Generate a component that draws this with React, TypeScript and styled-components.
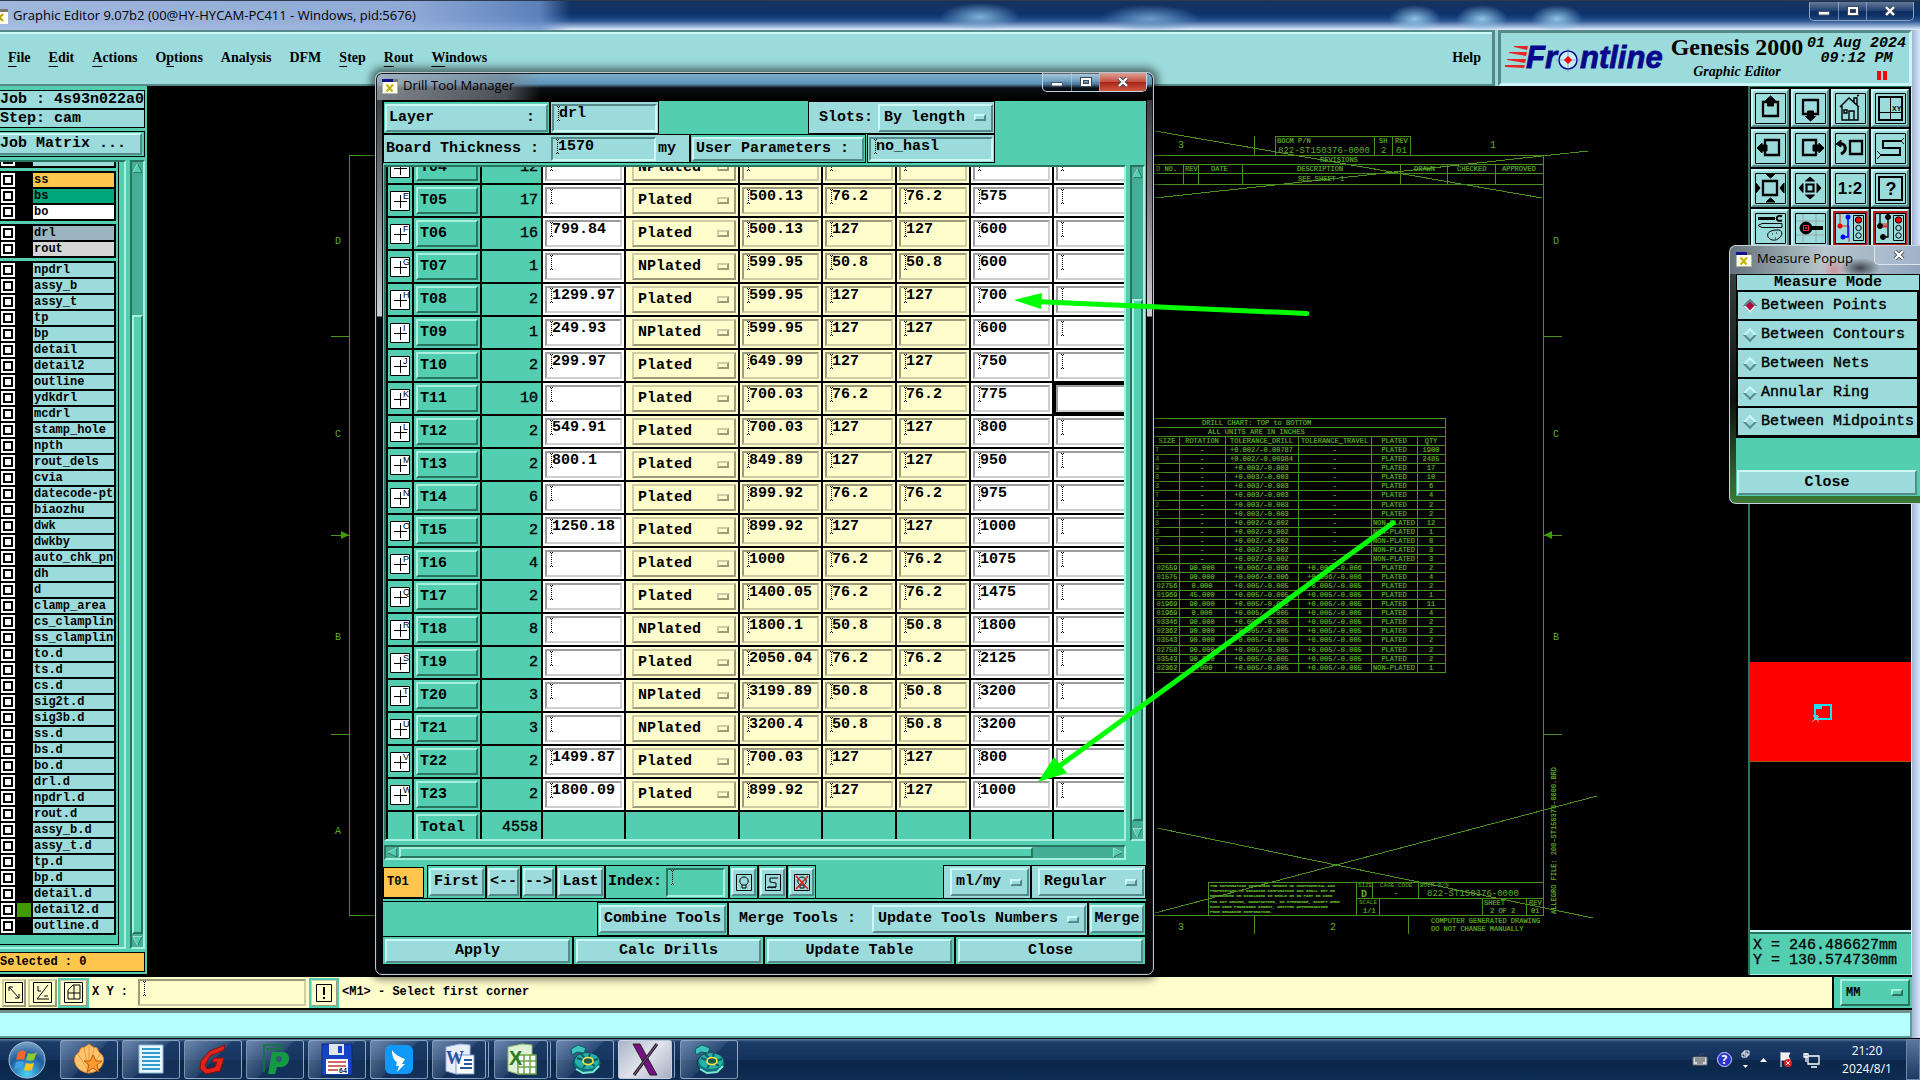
import React from 'react';
import styled, { createGlobalStyle, css } from 'styled-components';

const AQUA = '#9cdbdb';
const AQUA_HI = '#ccf7f7';
const AQUA_LO = '#568a8a';
const GREEN = '#53ceb0';
const GREEN_HI = '#a8f0de';
const GREEN_LO = '#28745f';
const TROUGH = '#44ae96';
const CREAM = '#fffdcc';
const ORANGE = '#ffc64d';
const CAD = '#4c9020';
const CAD_TEXT = '#5fae28';
const MONO = '"Liberation Mono", "Courier New", monospace';
const SERIF = '"Liberation Serif", "Times New Roman", serif';
const SANS = '"Open Sans", "Noto Sans", sans-serif';

type Tone = 'aqua' | 'green' | 'cream' | 'white';
const tones: Record<Tone, { bg: string; hi: string; lo: string }> = {
  aqua: { bg: AQUA, hi: AQUA_HI, lo: AQUA_LO },
  green: { bg: GREEN, hi: GREEN_HI, lo: GREEN_LO },
  cream: { bg: CREAM, hi: '#cfcda5', lo: '#9c9a78' },
  white: { bg: '#ffffff', hi: '#cfcfcf', lo: '#9c9c9c' },
};

const raised = (t: Tone) => css`
  background: ${tones[t].bg};
  border: 2px solid;
  border-color: ${tones[t].hi} ${tones[t].lo} ${tones[t].lo} ${tones[t].hi};
`;
const sunken = (t: Tone) => css`
  background: ${tones[t].bg};
  border: 2px solid;
  border-color: ${tones[t].lo} ${tones[t].hi} ${tones[t].hi} ${tones[t].lo};
`;

const GlobalStyle = createGlobalStyle`
  *, *::before, *::after { box-sizing: border-box; }
  body { margin: 0; background: #000; overflow: hidden; }
  button, input, select { margin: 0; border-radius: 0; color: #000; font: inherit; }
  svg { display: block; flex: none; }
`;

const Desktop = styled.div`
  position: relative;
  display: flex;
  flex-direction: column;
  height: 100vh;
  color: #000;
  font: bold 15px/18px ${MONO};
`;

/* ---------- main window frame ---------- */

const TitleBar = styled.header`
  display: flex;
  align-items: flex-start;
  height: 30px;
  padding: 1px 6px 0 0;
  border-top: 1px solid #2c3c50;
  font: 13px/26px ${SANS};
  background:
    radial-gradient(ellipse 26px 14px at 1415px 18px, #8fc3e6, transparent),
    radial-gradient(ellipse 26px 14px at 1482px 18px, #8fc3e6, transparent),
    radial-gradient(ellipse 26px 14px at 1557px 18px, #8fc3e6, transparent),
    radial-gradient(ellipse 40px 14px at 980px 16px, #7fb0d8, transparent),
    radial-gradient(ellipse 50px 14px at 1150px 18px, #6d9cc9, transparent),
    linear-gradient(90deg, rgba(168, 190, 226, 0.95) 0, rgba(150, 176, 220, 0.95) 410px, rgba(110, 146, 206, 0.8) 540px, transparent 570px),
    linear-gradient(#16325c 0, #0d3470 14px, #2a5590 20px, #b9cdea 27px, #e6eefb 29px);
`;
const TitleText = styled.h1`
  flex: 1;
  margin: 0 0 0 5px;
  font: inherit;
`;
const ControlGroup = styled.div<{ $dark?: boolean }>`
  display: flex;
  overflow: hidden;
  height: 19px;
  border: 1px solid ${p => (p.$dark ? '#c5d2e0' : '#8ba3c8')};
  border-top: 0;
  border-radius: 0 0 5px 5px;
`;
const ControlButton = styled.button<{ $wide?: boolean; $danger?: boolean }>`
  display: grid;
  place-items: center;
  width: ${p => (p.$wide ? 47 : 28)}px;
  padding: 0;
  border: 0;
  border-left: 1px solid rgba(200, 215, 235, 0.5);
  background: ${p =>
    p.$danger
      ? 'linear-gradient(#dba398, #c5503f 48%, #a92418 52%, #cf5a40)'
      : 'linear-gradient(rgba(255,255,255,.35), rgba(120,140,170,.12) 50%, rgba(10,20,40,.15) 52%)'};
  &:first-child { border-left: 0; }
`;

const AppFrame = styled.div`
  flex: 1;
  display: flex;
  flex-direction: column;
  min-height: 0;
  padding-right: 8px;
  background: linear-gradient(90deg, #9fb3cf, #d7e5fb) right / 8px 100% no-repeat;
`;
const HeaderRow = styled.div`
  display: flex;
  height: 56px;
  background: ${AQUA};
`;
const MenuBar = styled.nav`
  flex: 1;
  display: flex;
  align-items: center;
  gap: 18px;
  margin-right: 3px;
  padding: 0 11px 0 8px;
  border: 2px solid;
  border-width: 2px 3px 2px 0;
  border-color: ${AQUA_LO} ${AQUA_LO} ${AQUA_LO} ${AQUA_HI};
  box-shadow: inset 0 2px 0 ${AQUA_HI};
  font: bold 14px/20px ${SERIF};
`;
const MenuItem = styled.button<{ $last?: boolean }>`
  padding: 0;
  border: 0;
  background: none;
  margin-left: ${p => (p.$last ? 'auto' : '0')};
  u { text-underline-offset: 4px; }
`;
const Brand = styled.section`
  display: flex;
  width: 414px;
  padding: 0 2px 0 4px;
  border: 3px solid;
  border-color: ${AQUA_LO} ${AQUA_HI} ${AQUA_HI} ${AQUA_LO};
`;
const BrandTitles = styled.div`
  width: 138px;
  text-align: center;
  font: bold 24px/28px ${SERIF};
  white-space: nowrap;
`;
const BrandSub = styled.div`
  padding-top: 2px;
  font: italic bold 14px/18px ${SERIF};
`;
const Clock = styled.div`
  flex: 1;
  padding-top: 3px;
  text-align: center;
  white-space: nowrap;
  font: italic bold 15px/15px ${MONO};
`;
const PauseMark = styled.div`
  width: 10px;
  height: 9px;
  margin: 5px 20px 0 auto;
  border: solid #f00b0b;
  border-width: 0 4px;
`;

const Workspace = styled.main`
  flex: 1;
  display: grid;
  grid-template-columns: 147px 1fr 164px;
  min-height: 0;
  background: #000;
`;

/* ---------- layer list ---------- */

const LayerPanel = styled.aside`
  display: flex;
  flex-direction: column;
  min-height: 0;
  margin-bottom: 3px;
  padding: 4px 2px 2px 0;
  background: ${GREEN};
`;
const InfoRow = styled.div<{ $warm?: boolean }>`
  height: ${p => (p.$warm ? 20 : 19)}px;
  border: 1px solid #000;
  border-left: 0;
  background: ${p => (p.$warm ? ORANGE : AQUA)};
  font: ${p => (p.$warm ? 'bold 12px/18px' : 'bold 15px/18px')} ${MONO};
  white-space: pre;
`;
const MatrixFrame = styled.div`
  margin: 3px 0;
  padding: 1px 2px 1px 0;
  border: 1px solid #000;
  border-left: 0;
`;
const MatrixButton = styled.button`
  ${raised('aqua')}
  display: block;
  width: 100%;
  height: 22px;
  padding: 0;
  border-left: 0;
  text-align: left;
  line-height: 18px;
`;
const ListRow = styled.div`
  flex: 1;
  display: flex;
  gap: 4px;
  min-height: 0;
  margin-bottom: 3px;
`;
const ListFrame = styled.div`
  flex: 1;
  border: solid;
  border-width: 2px 2px 2px 0;
  border-color: ${GREEN_LO} ${GREEN_HI} ${GREEN_HI};
  padding-right: 5px;
`;
const ListScroll = styled.div`
  height: calc(100% - 2px);
  overflow: hidden;
  padding-right: 2px;
  border: solid #000;
  border-width: 0 1px 1px 0;
`;
const Group = styled.div<{ $cut?: boolean }>`
  display: grid;
  gap: 2px;
  margin: ${p => (p.$cut ? '-12px' : '0')} 0 3px;
  padding: 2px 2px 2px 1px;
  background: #000;
`;
const LayerRow = styled.div`
  display: grid;
  grid-template-columns: 14px 14px 1fr;
  gap: 2px;
  height: 14px;
`;
const LayerTick = styled.input`
  appearance: none;
  width: 14px;
  height: 14px;
  border: 2px solid #fff;
  background: #fff;
  outline: 2px solid #000;
  outline-offset: -4px;
`;
const Swatch = styled.span<{ $on?: boolean }>`
  background: ${p => (p.$on ? '#419900' : '#000')};
`;
const LayerName = styled.label<{ $bg: string }>`
  overflow: hidden;
  padding-left: 1px;
  background: ${p => p.$bg};
  font: bold 12px/14px ${MONO};
  white-space: nowrap;
`;

/* ---------- scroll bars ---------- */

const Track = styled.div<{ $horizontal?: boolean; $before: number; $thumb: number; $after: number }>`
  flex: none;
  display: grid;
  ${p =>
    p.$horizontal
      ? `grid-template-columns: 12px ${p.$before}fr ${p.$thumb}fr ${p.$after}fr 12px; height: 15px;`
      : `grid-template-rows: 12px ${p.$before}fr ${p.$thumb}fr ${p.$after}fr 12px; width: 15px;`}
  border: 2px solid;
  border-color: ${GREEN_LO} ${GREEN_HI} ${GREEN_HI} ${GREEN_LO};
  background: ${TROUGH};
`;
const Thumb = styled.div`
  ${raised('green')}
`;

function ScrollTrack(p: { horizontal?: boolean; before: number; thumb: number; after: number }) {
  const size = { width: p.horizontal ? 12 : 11, height: p.horizontal ? 11 : 12 };
  return (
    <Track $horizontal={p.horizontal} $before={p.before} $thumb={p.thumb} $after={p.after}>
      <svg {...size} viewBox="0 0 12 12">
        {p.horizontal ? (
          <><path d="M11 1L1 6l10 5z" fill={GREEN} stroke={GREEN_LO} /><path d="M11 1L1 6" stroke={GREEN_HI} /></>
        ) : (
          <><path d="M6 1l5 10H1z" fill={GREEN} stroke={GREEN_LO} /><path d="M6 1L1 11" stroke={GREEN_HI} /></>
        )}
      </svg>
      <i />
      <Thumb />
      <i />
      <svg {...size} viewBox="0 0 12 12">
        {p.horizontal ? (
          <><path d="M1 1l10 5-10 5z" fill={GREEN} stroke={GREEN_LO} /><path d="M1 11V1l10 5" fill="none" stroke={GREEN_HI} /></>
        ) : (
          <><path d="M1 1h10L6 11z" fill={GREEN} stroke={GREEN_LO} /><path d="M6 11L1 1h10" fill="none" stroke={GREEN_HI} /></>
        )}
      </svg>
    </Track>
  );
}

/* ---------- shared Motif controls ---------- */

const Overlay = styled.span<{ $w?: number }>`
  display: inline-grid;
  width: ${p => (p.$w ? `${p.$w}px` : '100%')};
  > * { grid-area: 1 / 1; }
`;
const FieldInput = styled.input<{ $tone: Tone; $h: number }>`
  ${p => sunken(p.$tone)}
  width: 100%;
  min-width: 0;
  height: ${p => p.$h}px;
  padding: 0 0 ${p => p.$h - 19}px 5px;
  font: bold 15px/15px ${MONO};
  outline: 0;
`;
const IBeam = styled.span`
  width: 3px;
  height: 15px;
  margin: 2px 0 0 5px;
  pointer-events: none;
  background:
    linear-gradient(90deg, #000 1px, transparent 1px 2px, #000 2px) top / 3px 1px no-repeat,
    linear-gradient(90deg, #000 1px, transparent 1px 2px, #000 2px) bottom / 3px 1px no-repeat,
    repeating-linear-gradient(transparent 0 1px, #000 1px 2px) 1px 0 / 1px 15px no-repeat;
`;
const OptionSelect = styled.select<{ $tone: Tone; $h: number }>`
  ${p => raised(p.$tone)}
  appearance: none;
  width: 100%;
  height: ${p => p.$h}px;
  padding: 0 20px 0 4px;
  font: bold 15px/18px ${MONO};
  outline: 0;
`;
const OptionMark = styled.span<{ $tone: Tone }>`
  ${p => raised(p.$tone)}
  place-self: center end;
  width: 12px;
  height: 7px;
  margin-right: 7px;
  pointer-events: none;
`;
const PushButton = styled.button<{ $w?: number; $h?: number; $tone?: Tone; $start?: boolean }>`
  ${p => raised(p.$tone ?? 'aqua')}
  display: grid;
  place-items: center;
  justify-items: ${p => (p.$start ? 'start' : 'center')};
  width: ${p => (p.$w ? `${p.$w}px` : '100%')};
  height: ${p => p.$h ?? 28}px;
  padding: ${p => (p.$start ? '0 0 0 2px' : '0')};
  white-space: pre;
`;

function Field(p: { value: string; label: string; tone: Tone; w?: number; h: number; beam?: boolean }) {
  return (
    <Overlay $w={p.w}>
      <FieldInput $tone={p.tone} $h={p.h} defaultValue={p.value} aria-label={p.label} />
      {p.beam !== false && <IBeam />}
    </Overlay>
  );
}
function Option(p: { value: string; others?: string[]; label: string; tone: Tone; w?: number; h: number }) {
  return (
    <Overlay $w={p.w}>
      <OptionSelect $tone={p.tone} $h={p.h} defaultValue={p.value} aria-label={p.label}>
        {[p.value, ...(p.others ?? [])].map(o => <option key={o}>{o}</option>)}
      </OptionSelect>
      <OptionMark $tone={p.tone} />
    </Overlay>
  );
}

/* ---------- right side ---------- */

const SideColumn = styled.aside`
  display: flex;
  flex-direction: column;
  border-left: 2px solid ${GREEN_LO};
  border-right: 1px solid ${AQUA_HI};
  border-top: 1px solid #28745f;
  margin-bottom: 2px;
`;
const ToolGrid = styled.div`
  display: grid;
  grid-template-columns: repeat(4, 38px);
  grid-auto-rows: 38px;
  gap: 2px;
  height: 446px;
  padding: 2px 0 0 1px;
`;
const ToolButton = styled.button<{ $alert?: boolean }>`
  display: grid;
  place-items: center;
  padding: 0;
  border: 2px solid;
  border-color: ${AQUA_HI} ${AQUA_LO} ${AQUA_LO} ${AQUA_HI};
  background: ${p => (p.$alert ? '#bb1d1d' : AQUA)};
`;
const Overview = styled.div`
  flex: 1;
  padding-top: 129px;
`;
const OverviewSheet = styled.div`
  display: grid;
  height: 100px;
  padding: 40px 0 0 60px;
  border-bottom: 1px solid #a85c00;
  background: #f00;
`;
const Coordinates = styled.output`
  height: 45px;
  padding: 6px 0 0 3px;
  border-top: 2px solid ${AQUA_HI};
  border-bottom: 1px solid ${GREEN_HI};
  box-shadow: inset 0 2px 0 ${GREEN_LO};
  background: ${GREEN};
  font: 15px/15px ${MONO};
  -webkit-text-stroke: 0.3px #000;
  white-space: pre;
`;

/* ---------- status area ---------- */

const StatusBar = styled.footer`
  display: flex;
  gap: 2px;
  height: 33px;
  border-bottom: 2px solid #000;
  background: #000;
  font: bold 12px/31px ${MONO};
`;
const StatusCell = styled.div<{ $grow?: boolean; $green?: boolean }>`
  flex: ${p => (p.$grow ? '1' : 'none')};
  display: flex;
  align-items: center;
  gap: 2px;
  padding: 1px 2px;
  background: ${p => (p.$green ? GREEN : CREAM)};
  white-space: pre;
`;
const IconFrame = styled.button<{ $w: number; $on?: boolean }>`
  ${raised('cream')}
  display: grid;
  place-items: center;
  width: ${p => p.$w}px;
  height: 28px;
  padding: 0;
  outline: ${p => (p.$on ? `2px solid ${GREEN}` : '0')};
  outline-offset: -1px;
`;
const MessageStrip = styled.div`
  height: 28px;
  border: solid;
  border-width: 3px 2px 2px 0;
  border-color: #70908f #5f9a9a #5f9a9a;
  background: #b5ffff;
`;
const UnitPad = styled.div`
  padding-left: 4px;
  line-height: 0;
  select { font-size: 12px; }
`;
const XYBox = styled.div`
  flex: none;
  width: 168px;
  margin-right: 2px;
  line-height: 0;
`;

/* ---------- Drill Tool Manager ---------- */

const Dialog = styled.section`
  position: absolute;
  left: 375px;
  top: 72px;
  width: 779px;
  padding: 0 6px 8px 6px;
  border: 1px solid #b9c6cf;
  border-radius: 7px;
  background:
    linear-gradient(90deg, rgba(170, 178, 186, 0.75), rgba(120, 128, 138, 0.6) 130px, transparent 165px) 0 0 / 100% 27px no-repeat,
    linear-gradient(#7fb0cc 0, #5d93b8 11px, #0a0d12 15px, #000 27px) 0 0 / 100% 27px no-repeat,
    linear-gradient(#3a3d42 28px, #c9ced2 243px, #05080b 244px);
  box-shadow: 0 0 9px 4px rgba(0, 0, 0, 0.55), inset 0 0 0 1px #15181c;
`;
const DialogTitle = styled.header`
  display: flex;
  align-items: flex-start;
  gap: 5px;
  height: 27px;
  font: 13px/25px ${SANS};
  h2 { flex: 1; margin: 0; font: inherit; }
  > svg { margin-top: 6px; }
`;
const DialogBody = styled.div`
  border: 1px solid #000;
  background: ${GREEN};
`;
const Line = styled.div<{ $h: number; $ruled?: boolean }>`
  display: flex;
  align-items: center;
  height: ${p => p.$h}px;
  margin-top: ${p => (p.$ruled ? '3px' : '0')};
  box-shadow: ${p => (p.$ruled ? '0 -1px 0 #000, 0 -3px 0 #53ceb0, 0 -4px 0 #000' : 'none')};
`;
const Cell = styled.div<{ $w?: number; $tone?: Tone; $pad?: string; $blank?: boolean }>`
  flex: none;
  display: flex;
  align-items: center;
  width: ${p => (p.$w ? `${p.$w}px` : 'auto')};
  height: 100%;
  padding: ${p => p.$pad ?? '0 1px'};
  border: 1px solid ${p => (p.$blank ? 'transparent' : '#000')};
  background: ${p => tones[p.$tone ?? 'green'].bg};
  white-space: pre;
`;
const Spacer = styled.span`
  flex: 1;
`;
const LayerButton = styled(PushButton)`
  display: flex;
  justify-content: space-between;
  align-items: center;
  padding: 0 11px 0 2px;
`;
const Caption = styled.label<{ $w?: number }>`
  flex: none;
  width: ${p => (p.$w ? `${p.$w}px` : 'auto')};
  padding-left: 2px;
`;
const TableArea = styled.div`
  display: grid;
  grid-template-columns: 1fr 15px;
  gap: 4px;
  padding: 2px 1px 5px 1px;
`;
const Viewport = styled.div`
  overflow: hidden;
  height: 676px;
  border: 2px solid;
  border-color: ${GREEN_LO} ${GREEN_HI} ${GREEN_HI} ${GREEN_LO};
`;
const DrillTable = styled.table`
  table-layout: fixed;
  width: 749px;
  margin-top: -15px;
  border-collapse: separate;
  border-spacing: 0;
  border-left: 2px solid #000;
`;
const Td = styled.td<{ $tone: Tone; $pad?: string; $focus?: boolean }>`
  height: 33px;
  padding: ${p => p.$pad ?? '2px'};
  border: solid #000;
  border-width: 0 2px 2px 0;
  background: ${p => tones[p.$tone].bg};
  box-shadow: ${p => (p.$focus ? 'inset 0 0 0 2px #000' : 'none')};
  line-height: 0;
`;
const CountTd = styled(Td)`
  text-align: right;
  font-weight: normal;
  line-height: 18px;
  -webkit-text-stroke: 0.4px #000;
`;
const ToolCode = styled(PushButton)`
  place-items: center start;
  padding-left: 2px;
  line-height: 18px;
`;
const Tag = styled.div`
  display: grid;
  place-items: center start;
  flex: none;
  width: 41px;
  height: 31px;
  margin-right: 3px;
  padding-left: 3px;
  border: 1px solid #000;
  background: ${ORANGE};
  font: bold 12px/16px ${MONO};
`;
const ActionRow = styled.div`
  display: grid;
  grid-template-columns: repeat(4, 1fr);
  gap: 2px;
  height: 29px;
  background: #000;
  padding: 1px 1px 1px 0;
`;
const ActionCell = styled.div`
  padding: 2px 2px 1px;
  background: ${GREEN};
`;

/* ---------- Measure popup ---------- */

const Popup = styled.section`
  position: absolute;
  top: 245px;
  right: 0;
  width: 191px;
  padding: 0 0 7px 6px;
  border: 1px solid #c9d2d8;
  border-right: 0;
  border-radius: 7px 0 0 7px;
  background:
    radial-gradient(circle 14px at 104px 24px, rgba(220, 120, 130, 0.6), transparent),
    radial-gradient(ellipse 20px 10px at 130px 22px, rgba(20, 20, 25, 0.7), transparent),
    linear-gradient(90deg, #65717b, #b9c8cf 50%, #93a5bd) 0 0 / 100% 28px no-repeat,
    linear-gradient(#3f4a45, #0c120e 60%, #3c7a34);
`;
const PopupTitle = styled.header`
  display: flex;
  gap: 5px;
  height: 28px;
  font: 13px/24px ${SANS};
  h2 { flex: 1; margin: 0; font: inherit; white-space: nowrap; }
  > svg { margin-top: 6px; }
`;
const PopupClose = styled.button`
  display: grid;
  place-items: center;
  width: 46px;
  height: 19px;
  padding: 0 0 0 2px;
  border: 1px solid #dbe5ee;
  border-width: 0 0 1px 1px;
  border-radius: 0 0 0 5px;
  background: rgba(190, 205, 225, 0.35);
`;
const ModeSet = styled.fieldset`
  display: grid;
  grid-auto-rows: 27px;
  gap: 2px;
  margin: 0;
  padding: 0 2px 2px 1px;
  border: 1px solid #000;
  background: #000;
`;
const ModeLegend = styled.div`
  height: 17px;
  border: 1px solid #000;
  background: ${AQUA};
  text-align: center;
  line-height: 16px;
`;
const ModeLabel = styled.label`
  display: flex;
  align-items: center;
  gap: 4px;
  padding-left: 5px;
  background: ${AQUA};
  font: 15px/18px ${MONO};
  -webkit-text-stroke: 0.4px #000;
  white-space: nowrap;
`;
const Diamond = styled.input`
  appearance: none;
  width: 10px;
  height: 10px;
  margin: 0 2px;
  flex: none;
  transform: rotate(45deg);
  border: 2px solid;
  border-color: ${AQUA_HI} ${AQUA_LO} ${AQUA_LO} ${AQUA_HI};
  background: ${AQUA};
  &:checked {
    border-color: ${AQUA_LO} ${AQUA_HI} ${AQUA_HI} ${AQUA_LO};
    background: #b8003c;
  }
`;
const PopupFoot = styled.div`
  padding: 32px 3px 1px 1px;
  background: ${GREEN};
`;

/* ---------- taskbar ---------- */

const Taskbar = styled.footer`
  display: flex;
  align-items: center;
  gap: 4px;
  height: 42px;
  padding-left: 8px;
  border-top: 1px solid #000;
  background: linear-gradient(#5b7ba3 0, #1c3c68 3px, #13315c 50%, #0b2749 52%, #0d2c52);
`;
const TaskButton = styled.button<{ $active?: boolean; $stack?: boolean }>`
  display: grid;
  place-items: center;
  width: ${p => (p.$stack ? 54 : 58)}px;
  height: 39px;
  margin-right: ${p => (p.$stack ? 4 : 0)}px;
  padding: 0;
  border: 1px solid rgba(190, 208, 230, 0.6);
  border-radius: 3px;
  background: ${p =>
    p.$active
      ? 'linear-gradient(135deg, #aab4c8, #e0e3ec 50%, #a9aec2)'
      : 'linear-gradient(135deg, rgba(150,175,210,.65), rgba(80,112,155,.35) 50%, rgba(30,60,105,.4) 52%)'};
  box-shadow: ${p => (p.$stack ? '3px 0 0 -1px #16335c, 4px 0 0 -1px #8ca3c4' : 'none')};
`;
const StartOrb = styled.button`
  width: 38px;
  height: 38px;
  margin-right: 10px;
  padding: 0;
  border: 0;
  background: none;
`;
const Tray = styled.div`
  display: flex;
  align-items: center;
  gap: 9px;
  margin-left: auto;
  color: #fff;
  font: 12px/18px ${SANS};
  text-align: center;
`;
const TrayClock = styled.time`
  width: 60px;
  margin-left: 8px;
`;
const ShowDesktop = styled.button`
  width: 14px;
  height: 41px;
  border: 1px solid #6f88a8;
  background: linear-gradient(#5a769b, #1b3a63);
`;
const ArrowLayer = styled.svg`
  position: absolute;
  left: 1000px;
  top: 280px;
  pointer-events: none;
`;

/* ---------- data ---------- */

const layerGroups: [string, string][][] = [
  [['ts', AQUA]],
  [['ss', ORANGE], ['bs', '#00a67c'], ['bo', '#ffffff']],
  [['drl', '#9cb4bf'], ['rout', '#d6d6d6']],
  'npdrl assy_b assy_t tp bp detail detail2 outline ydkdrl mcdrl stamp_hole npth rout_dels cvia datecode-pte biaozhu dwk dwkby auto_chk_pnl dh d clamp_area cs_clampline ss_clampline to.d ts.d cs.d sig2t.d sig3b.d ss.d bs.d bo.d drl.d npdrl.d rout.d assy_b.d assy_t.d tp.d bp.d detail.d detail2.d outline.d'
    .split(' ')
    .map(n => [n, AQUA] as [string, string]),
];

const tools: [string, string, number, string, string, string, string, string][] = [
  ['T04', 'D', 12, '', 'NPlated', '500.13', '50.8', '500'],
  ['T05', 'E', 17, '', 'Plated', '500.13', '76.2', '575'],
  ['T06', 'F', 16, '799.84', 'Plated', '500.13', '127', '600'],
  ['T07', 'G', 1, '', 'NPlated', '599.95', '50.8', '600'],
  ['T08', 'H', 2, '1299.97', 'Plated', '599.95', '127', '700'],
  ['T09', 'I', 1, '249.93', 'NPlated', '599.95', '127', '600'],
  ['T10', 'J', 2, '299.97', 'Plated', '649.99', '127', '750'],
  ['T11', 'K', 10, '', 'Plated', '700.03', '76.2', '775'],
  ['T12', 'L', 2, '549.91', 'Plated', '700.03', '127', '800'],
  ['T13', 'M', 2, '800.1', 'Plated', '849.89', '127', '950'],
  ['T14', 'N', 6, '', 'Plated', '899.92', '76.2', '975'],
  ['T15', 'O', 2, '1250.18', 'Plated', '899.92', '127', '1000'],
  ['T16', 'P', 4, '', 'Plated', '1000', '76.2', '1075'],
  ['T17', 'Q', 2, '', 'Plated', '1400.05', '76.2', '1475'],
  ['T18', 'R', 8, '', 'NPlated', '1800.1', '50.8', '1800'],
  ['T19', 'S', 2, '', 'Plated', '2050.04', '76.2', '2125'],
  ['T20', 'T', 3, '', 'NPlated', '3199.89', '50.8', '3200'],
  ['T21', 'U', 3, '', 'NPlated', '3200.4', '50.8', '3200'],
  ['T22', 'V', 2, '1499.87', 'Plated', '700.03', '127', '800'],
  ['T23', 'W', 2, '1800.09', 'Plated', '899.92', '127', '1000'],
];

const chartRows: string[][] = [
  ['T', '-', '+0.002/-0.00787', '-', 'PLATED', '1900'],
  ['4', '-', '+0.002/-0.00984', '-', 'PLATED', '2485'],
  ['9', '-', '+0.003/-0.003', '-', 'PLATED', '17'],
  ['8', '-', '+0.003/-0.003', '-', 'PLATED', '10'],
  ['3', '-', '+0.003/-0.003', '-', 'PLATED', '6'],
  ['T', '-', '+0.003/-0.003', '-', 'PLATED', '4'],
  ['2', '-', '+0.003/-0.003', '-', 'PLATED', '2'],
  ['1', '-', '+0.003/-0.003', '-', 'PLATED', '2'],
  ['8', '-', '+0.002/-0.002', '-', 'NON-PLATED', '12'],
  ['2', '-', '+0.002/-0.002', '-', 'NON-PLATED', '1'],
  ['T', '-', '+0.002/-0.002', '-', 'NON-PLATED', '8'],
  ['8', '-', '+0.002/-0.002', '-', 'NON-PLATED', '3'],
  ['', '-', '+0.002/-0.002', '-', 'NON-PLATED', '3'],
  ['02559', '90.000', '+0.006/-0.006', '+0.006/-0.006', 'PLATED', '2'],
  ['01575', '90.000', '+0.006/-0.006', '+0.006/-0.006', 'PLATED', '4'],
  ['02756', '0.000', '+0.005/-0.005', '+0.005/-0.005', 'PLATED', '2'],
  ['01969', '45.000', '+0.005/-0.005', '+0.005/-0.005', 'PLATED', '1'],
  ['01969', '90.000', '+0.005/-0.005', '+0.005/-0.005', 'PLATED', '11'],
  ['01969', '0.000', '+0.005/-0.005', '+0.005/-0.005', 'PLATED', '4'],
  ['03346', '90.000', '+0.005/-0.005', '+0.005/-0.005', 'PLATED', '2'],
  ['02362', '90.000', '+0.005/-0.005', '+0.005/-0.005', 'PLATED', '2'],
  ['03543', '90.000', '+0.005/-0.005', '+0.005/-0.005', 'PLATED', '2'],
  ['02758', '90.000', '+0.005/-0.005', '+0.005/-0.005', 'PLATED', '2'],
  ['03543', '90.000', '+0.005/-0.005', '+0.005/-0.005', 'PLATED', '2'],
  ['02362', '0.000', '+0.005/-0.005', '+0.005/-0.005', 'NON-PLATED', '1'],
];

/* ---------- drawings ---------- */

function XIcon() {
  return (
    <svg width="16" height="15" viewBox="0 0 16 15">
      <path d="M.5.5h15v14H.5z" fill="#fffff0" stroke="#b5b5a8" />
      <path d="M0 0h16v3H0z" fill="#10108c" />
      <path d="M11 0h5v3h-5z" fill="#777" />
      <path d="M4.500 5.500l6 7M11 5.500l-6.500 7" stroke="#c8b400" strokeWidth="2" />
    </svg>
  );
}
const MinGlyph = () => (
  <svg width="12" height="10" viewBox="0 0 12 10"><path d="M.5 5.500h11v3.500H.5z" fill="#fff" stroke="#4a566a" /></svg>
);
const MaxGlyph = () => (
  <svg width="12" height="10" viewBox="0 0 12 10"><path d="M2 2h8v6H2z" fill="none" stroke="#3d4a5e" strokeWidth="4" /><path d="M2 2h8v6H2z" fill="none" stroke="#fff" strokeWidth="2" /></svg>
);
const CloseGlyph = () => (
  <svg width="12" height="10" viewBox="0 0 12 10"><path d="M2 1l8 8M10 1L2 9" stroke="#3d4654" strokeWidth="4" /><path d="M2 1l8 8M10 1L2 9" stroke="#fff" strokeWidth="2.400" /></svg>
);

function FrontlineLogo() {
  return (
    <svg width="163" height="50" viewBox="0 0 163 50" role="img" aria-label="Frontline">
      <g fill="#f01414">
        <path d="M23 13H9v1l13 3zM22 19H4v1l17 3zM21 26H2v1l18 3zM20 32H0v2l19 1z" opacity=".9" />
      </g>
      <g fill="#08088c" stroke="#08088c" strokeWidth=".8" fontFamily="Liberation Sans, Arial, sans-serif" fontWeight="bold" fontStyle="italic" fontSize="31">
        <text x="21" y="35">Fr</text>
        <text x="75" y="35">ntline</text>
      </g>
      <circle cx="63" cy="27" r="9" fill="#c9ecf2" stroke="#08088c" strokeWidth="1.500" />
      <path d="M63 15v24M51 27h24" stroke="#6d86b8" strokeWidth=".6" />
      <path d="M63 23l4 4-4 4-4-4z" fill="#f00" />
    </svg>
  );
}

function ToolSymbol({ letter }: { letter: string }) {
  return (
    <svg width="20" height="20" viewBox="0 0 20 20">
      <path d="M.5.500h19v19H.5z" fill="#fff" stroke="#000" />
      <path d="M10.500 4v13M4 10.500h13" stroke="#000" />
      <text x="13" y="8" fontSize="9" fontFamily="Liberation Sans" fontWeight="normal">{letter}</text>
    </svg>
  );
}

const toolIcons: React.ReactNode[] = [
  <><path d="M8 9h15v14H8z" fill="none" strokeWidth="2.300" /><path d="M15.500 3l5 4.500h-2V13h-6V7.500h-2z" fill="#000" /></>,
  <><path d="M8 7h15v14H8z" fill="none" strokeWidth="2.300" /><path d="M15.500 28l5-4.500h-2V18h-6v5.500h-2z" fill="#000" /></>,
  <><path d="M5 14L14 5l10 9M7 13v14h16V13M14 27v-9h5v9M9 17h3v3H9zM19 9V5h3v7M22 3l2-1" fill="none" strokeWidth="1.400" /></>,
  <><path d="M4 4h23v23H4z" fill="none" strokeWidth="2" /><path d="M15.500 4v23M4 19.500h23" fill="none" /><text x="17" y="18" fontSize="7" stroke="none">XY</text></>,
  <><path d="M10 7h14v15H10z" fill="none" strokeWidth="2.300" /><path d="M2 15l5-5v2h5v6H7v2z" fill="#000" /></>,
  <><path d="M8 7h13v15H8z" fill="none" strokeWidth="2.300" /><path d="M29 15l-5-5v2h-6v6h6v2z" fill="#000" /></>,
  <><path d="M15 8h12v13H15z" fill="none" strokeWidth="2.300" /><path d="M4 11c5-1 7 2 6 6-.5 2-2 3-4 4" fill="none" strokeWidth="3" /><path d="M1 11l5-4v7z" fill="#000" /></>,
  <><path d="M26 8H8v7h17v7H6" fill="none" strokeWidth="2" /><path d="M29 5l-3 3 3 3M2 18l4 4-4 4" fill="none" /></>,
  <><path d="M8 8h14v14H8z" fill="none" strokeWidth="2.300" /><path d="M11 1h9l-4.500 4zM11 29h9l-4.500-4zM1 10v10l4-5zM29 10v10l-4-5z" fill="#000" /></>,
  <><path d="M11.500 11.500h7v7h-7z" fill="none" strokeWidth="2.200" /><path d="M10.500 8h9L15 4zM10.500 22h9L15 26zM8 10.500v9L4 15zM22 10.500v9l4-4.500z" fill="#000" /></>,
  <text x="15" y="21" fontSize="17" fontWeight="bold" textAnchor="middle" stroke="none">1:2</text>,
  <><path d="M4 4h23v23H4z" fill="none" strokeWidth="2" /><text x="16" y="22" fontSize="18" fontWeight="bold" textAnchor="middle" stroke="none">?</text></>,
  <><path d="M3 5.500h17" strokeWidth="3" /><path d="M27 3.500c-6-3-8 6 0 4" fill="none" strokeWidth="2" /><path d="M3 12.500l4-2h20v4H7z" fill="none" /><path d="M22 17c6-1 6 6 2 8-3 3-8 3-11-1-2-5 4-7 9-7zM17 21h1M21 20h1M20 25h1" fill="none" /></>,
  <><path d="M8 1v28M21 1v28M1 8h28M1 22h28" stroke="#9aa6a6" /><path d="M15 15h13" strokeWidth="4" /><circle cx="11" cy="15" r="6" fill="#000" /><path d="M8.500 12.500h5v5h-5zM10.500 14.500h1v1h-1z" fill="none" stroke="#f33" /></>,
  <><path d="M5 1v12h9v16" fill="none" stroke="#e02020" /><path d="M13 4v20H8" fill="none" stroke="#00f" strokeWidth="1.500" /><circle cx="5" cy="13" r="2.500" fill="#e00" stroke="none" /><circle cx="13" cy="4" r="2.500" fill="#00f" stroke="none" /><circle cx="8" cy="24" r="2.500" fill="#00f" stroke="none" /></>,
  <><path d="M5 1v12M13 4v20H8" fill="none" strokeWidth="1.300" /><path d="M8 10v4h4v-4M10 10v4M8 13h4" fill="none" stroke="#e02020" /><circle cx="5" cy="13" r="2.500" fill="#000" /><circle cx="13" cy="4" r="2.500" fill="#000" /><circle cx="8" cy="24" r="2.500" fill="#000" /></>,
];
const toolNames = ['Pan up', 'Pan down', 'Home view', 'Zoom to XY', 'Pan left', 'Pan right', 'Previous view', 'Serpentine', 'Zoom in', 'Zoom out', 'Scale 1:2', 'Query', 'Settings', 'Snap', 'Net check', 'Selected net check'];

function ToolIcon({ index }: { index: number }) {
  return (
    <svg width="31" height="31" viewBox="0 0 31 31" fontFamily="Liberation Sans, Arial, sans-serif" stroke="#000" fill="#000">
      <path d="M.5.500h30v30H.5z" fill={AQUA} />
      {toolIcons[index]}
      {index >= 14 && (
        <g fill="none">
          <path d="M18.500 2.500h10v25h-10z" />
          <circle cx="23.500" cy="7" r="3.200" fill="#f00" />
          <circle cx="23.500" cy="15" r="2.700" />
          <circle cx="23.500" cy="22.500" r="2.700" />
        </g>
      )}
    </svg>
  );
}

const CadSvg = styled.svg`
  width: 100%;
  height: 100%;
  font-family: "Liberation Mono", monospace;
  font-weight: normal;
`;
const CadPane = styled.div`
  overflow: hidden;
  min-height: 0;
`;

/* The sheet is drawn in screen units; the group shift puts its origin at the window corner. */
function CadDrawing() {
  const colX = [1155, 1179, 1225, 1298, 1371, 1417, 1445];
  const rowY = (i: number) => 418 + Math.round(i * 9.060);
  const mid = (i: number) => (colX[i] + colX[i + 1]) / 2;
  return (
    <CadPane>
      <CadSvg role="img" aria-label="Drill drawing">
        <g transform="translate(-147 -86)" fill={CAD_TEXT}>
          <g fill="none" stroke={CAD} shapeRendering="crispEdges">
            <path d="M390 155.500H349.500V915.500H390M331 336.500h18M331 535.500h18M331 734.500h18" />
            <path d="M1150 155.500H1543.500V915.500H1150M1543 336.500h19M1543 535.500h19M1543 734.500h19" />
            <path d="M1150 164.500h393M1150 173.500h393M1150 184.500h393M1183.500 164v20M1198.500 164v20M1242.500 164v20M1400.500 164v20M1447.500 164v20M1495.500 164v20" />
            <path d="M1275.500 155v-19h135v19M1374.500 136v19M1392.500 136v19M1254.500 136v19" />
            <path d="M1155 131L1542 198M1155 198L1588 151M1157 828L1593 918M1155 913L1597 796" />
            <path d="M1208.500 915v-33h335M1356.500 882v33M1372.500 882v16M1418.500 882v16M1356 898.500h187M1379.500 898v17M1482.500 898v17M1526.500 898v17M1254.500 915v19M1408.500 915v19" />
            {Array.from({ length: 29 }, (_, i) => <path key={i} d={`M1150 ${rowY(i) + 0.5}h296`} />)}
            {colX.slice(1, 6).map(x => <path key={x} d={`M${x + 0.5} 436v236`} />)}
            <path d="M1445.500 418v254" />
          </g>
          <path d="M349 535l-8-4v8zM1544 535l8-4v8z" fill="#419900" />
          <g fontSize="10" textAnchor="middle">
            <text x="338" y="244">D</text><text x="338" y="437">C</text><text x="338" y="640">B</text><text x="338" y="834">A</text>
            <text x="1556" y="244">D</text><text x="1556" y="437">C</text><text x="1556" y="640">B</text>
            <text x="1181" y="148">3</text><text x="1493" y="148">1</text><text x="1181" y="930">3</text><text x="1333" y="930">2</text>
          </g>
          <g fontSize="7" stroke={CAD_TEXT} strokeWidth=".2">
            <text x="1277" y="143">BOCM P/N</text><text x="1379" y="143">SH</text><text x="1395" y="143">REV</text>
            <text x="1320" y="162">REVISIONS</text>
            <text x="1156" y="171">D NO.</text><text x="1185" y="171">REV</text><text x="1211" y="171">DATE</text><text x="1297" y="171">DESCRIPTION</text>
            <text x="1414" y="171">DRAWN</text><text x="1457" y="171">CHECKED</text><text x="1502" y="171">APPROVED</text>
            <text x="1298" y="181">SEE SHEET 1</text>
            <text x="1202" y="425">DRILL CHART: TOP to BOTTOM</text>
            <text x="1208" y="434">ALL UNITS ARE IN INCHES</text>
            <text x="1431" y="923">COMPUTER GENERATED DRAWING</text>
            <text x="1431" y="931">DO NOT CHANGE MANUALLY</text>
            <text x="1394" y="895">-</text><text x="1363" y="913">1/1</text>
            <text x="1484" y="905">SHEET</text><text x="1490" y="913">2 OF 2</text><text x="1529" y="905">REV</text><text x="1531" y="913">01</text>
          </g>
          <g fontSize="6">
            <text x="1358" y="887">SIZE</text><text x="1380" y="887">CAGE CODE</text><text x="1420" y="887">BOCM P/N</text>
            <text x="1359" y="904">SCALE</text>
          </g>
          <g fontSize="9">
            <text x="1278" y="153">822-ST150376-0000</text><text x="1381" y="153">2</text><text x="1396" y="153">01</text>
            <text x="1427" y="896">822-ST150376-0000</text>
            <text x="1361" y="897" fontSize="10" fontWeight="bold">D</text>
            <text transform="translate(1556 914) rotate(-90)" fontSize="7" stroke={CAD_TEXT} strokeWidth=".2">ALLEGRO FILE: 200-ST150376-0000.BRD</text>
          </g>
          <g fontSize="4" fontWeight="bold" stroke={CAD_TEXT} strokeWidth=".2">
            <text x="1210" y="887">THE INFORMATION CONTAINED HEREIN IS CONFIDENTIAL AND</text>
            <text x="1210" y="892">PROPRIETARY TO BROADCOM CORPORATION AND SHALL NOT BE</text>
            <text x="1210" y="897">REPRODUCED OR DISCLOSED IN WHOLE OR IN PART OR USED</text>
            <text x="1210" y="903">FOR ANY DESIGN, MANUFACTURE, OR OTHERWISE, EXCEPT WHEN</text>
            <text x="1210" y="908">SUCH USER POSSESSES DIRECT, WRITTEN AUTHORIZATION</text>
            <text x="1210" y="913">FROM BROADCOM CORPORATION.</text>
          </g>
          <g fontSize="7" textAnchor="middle" stroke={CAD_TEXT} strokeWidth=".2">
            {['SIZE', 'ROTATION', 'TOLERANCE_DRILL', 'TOLERANCE_TRAVEL', 'PLATED', 'QTY'].map((h, i) => (
              <text key={h} x={mid(i)} y="443">{h}</text>
            ))}
            {chartRows.map((r, ri) => r.map((c, ci) => (
              <text key={`${ri}-${ci}`} x={ci === 0 && c.length < 2 ? 1157 : mid(ci)} y={rowY(ri + 3) + 7}>{c}</text>
            )))}
          </g>
        </g>
      </CadSvg>
    </CadPane>
  );
}

/* ---------- taskbar pictures ---------- */

function GenesisArt() {
  return (
    <>
      <ellipse cx="19" cy="21" rx="14" ry="10" fill="#0d6f78" stroke="#063b42" />
      <ellipse cx="19" cy="19" rx="12" ry="8" fill="#25b0a8" />
      <path d="M9 16l6 2M13 12l4 4M22 11l-1 4M30 17l-6 2M27 24l-5-3M15 26l3-4" stroke="#0b5c60" strokeWidth="2" />
      <ellipse cx="20" cy="19" rx="5" ry="3.500" fill="#1a5f50" stroke="#ffe24a" strokeWidth="1.600" />
      <path d="M3 7l7-4 8 3-2 5-7-1-5 3z" fill="#3cc4bd" stroke="#0b5c60" />
      <path d="M8 27l7 4 10-1 6-6" fill="none" stroke="#7ee8d8" strokeWidth="2" />
    </>
  );
}

const taskIcons: { name: string; active?: boolean; stack?: boolean; art: React.ReactNode }[] = [
  { name: 'Shell', art: <><path d="M17 31C4 30 0 18 4 13l3-3 2-4 4-1 4-3 4 3 4 1 2 4 3 3c4 5 0 17-13 18z" fill="#ffc56b" stroke="#d9822b" /><path d="M17 30L6 12M17 30L12 6M17 30V4M17 30l5-24M17 30l11-18" stroke="#e79a43" /><path d="M21 13l3 6h6l-5 4 2 7-6-4-6 4 2-7-5-4h6z" fill="#ff9a2e" stroke="#b85a10" /></> },
  { name: 'Notepad', art: <><path d="M5 3h24v28H5z" fill="#e9f7fd" stroke="#88b9d2" /><path d="M8 7h18M8 11h18M8 15h18M8 19h18M8 23h18M8 27h18" stroke="#2e9cd0" strokeWidth="2.200" /></> },
  { name: 'G tool', art: <path d="M29 3L14 9 5 19l-1 8 6 5 14-3 4-13h-10l-2 4h5l-2 5-8 2-2-4 5-9 14-6z" fill="#e2231a" stroke="#8d0f0a" /> },
  { name: 'P tool', art: <><path d="M14 10h12c8 2 6 14-2 15h-5l-2 7h-7z" fill="#139a43" /><path d="M6 30V3h18v4H8" fill="none" stroke="#0d7a35" strokeWidth="1.500" /><circle cx="21" cy="17" r="3" fill="#2f5b74" /></> },
  { name: 'Save disk', art: <><path d="M2 2h30v31H2z" fill="#1644c8" stroke="#0a2a80" /><path d="M9 2h15v11H9z" fill="#dfe6ee" /><path d="M18 4h4v7h-4z" fill="#1644c8" /><path d="M6 17h22v15H6z" fill="#fff" /><path d="M8 20h18M8 24h18M8 28h10" stroke="#c03838" strokeWidth="1.300" /><text x="19" y="31" fontSize="7" fontFamily="Liberation Sans" fill="#222">64</text></> },
  { name: 'DingTalk', art: <><rect x="3" y="3" width="28" height="29" rx="6" fill="#1199fa" /><path d="M10 8c3 5 8 7 13 9l-3 5h3l-8 8 2-6h-3l1-4c-3-1-5-6-5-12z" fill="#fff" /></> },
  { name: 'Word', stack: true, art: <><path d="M4 5l14-3 10 1v27l-14 2L4 29z" fill="#e8eef9" stroke="#9db0d8" /><path d="M14 13h18v19H14z" fill="#fff" stroke="#7d9bd0" /><path d="M22 18h8M22 22h8M18 26h12" stroke="#2b579a" strokeWidth="2" /><text x="4" y="22" fontFamily="Liberation Serif" fontSize="18" fontWeight="bold" fill="#2b4f9e">W</text></> },
  { name: 'Excel', stack: true, art: <><path d="M4 5l14-3 10 1v27l-14 2L4 29z" fill="#dff0d4" stroke="#8bb878" /><path d="M14 13h18v19H14zM14 19h18M14 25h18M20 13v19M26 13v19" fill="#fff" stroke="#6da544" strokeWidth="1.500" /><text x="5" y="23" fontFamily="Liberation Sans" fontSize="20" fontWeight="bold" fill="#2c7a22">X</text></> },
  { name: 'Genesis', art: <GenesisArt /> },
  { name: 'X server', active: true, stack: true, art: <><path d="M5 2h7l17 31h-7z" fill="#7b0f86" stroke="#222" /><path d="M29 2L6 33" stroke="#222" strokeWidth="3" /><path d="M29 2L6 33" stroke="#a44fae" /></> },
  { name: 'Genesis 2', art: <GenesisArt /> },
];

const menus: [string, string, string][] = [
  ['', 'F', 'ile'], ['', 'E', 'dit'], ['', 'A', 'ctions'], ['O', 'p', 'tions'], ['Analysis', '', ''],
  ['DFM', '', ''], ['', 'S', 'tep'], ['', 'R', 'out'], ['', 'W', 'indows'],
];

function DrillDialog() {
  return (
    <Dialog>
      <DialogTitle>
        <XIcon />
        <h2>Drill Tool Manager</h2>
        <ControlGroup $dark>
          <ControlButton aria-label="Minimize"><MinGlyph /></ControlButton>
          <ControlButton aria-label="Maximize"><MaxGlyph /></ControlButton>
          <ControlButton $wide $danger aria-label="Close"><CloseGlyph /></ControlButton>
        </ControlGroup>
      </DialogTitle>
      <DialogBody>
        <Line $h={33}>
          <Cell $w={167}><LayerButton><span>Layer</span><span>:</span></LayerButton></Cell>
          <Cell $w={109} $tone="aqua"><Field value="drl" label="Layer" tone="aqua" h={28} /></Cell>
          <Spacer />
          <Cell $w={187} $tone="aqua" $pad="0 1px 0 8px">
            <Caption $w={61}>Slots:</Caption>
            <Option value="By length" label="Slots" tone="aqua" w={115} h={28} />
          </Cell>
          <Cell $w={151} $blank />
        </Line>
        <Line $h={29}>
          <Cell $w={307} $tone="aqua" $pad="0">
            <Caption $w={167}>Board Thickness :</Caption>
            <Field value="1570" label="Board Thickness" tone="aqua" w={105} h={24} />
            <Caption>my</Caption>
          </Cell>
          <Cell $w={176}><PushButton $h={24} $start>User Parameters :</PushButton></Cell>
          <Spacer />
          <Cell $w={128} $tone="aqua"><Field value="no_hasl" label="User Parameters" tone="aqua" h={24} /></Cell>
          <Cell $w={151} $blank />
        </Line>
        <TableArea>
          <Viewport>
            <DrillTable>
              <colgroup>
                {[26, 68, 61, 83, 114, 83, 74, 74, 83, 83].map((w, i) => <col key={i} width={w} />)}
              </colgroup>
              <tbody>
                {tools.map(([code, letter, count, slot, kind, size, tol, drill]) => (
                  <tr key={code}>
                    <Td $tone="green"><ToolSymbol letter={letter} /></Td>
                    <Td $tone="green"><ToolCode $tone="green" $h={27}>{code}</ToolCode></Td>
                    <CountTd $tone="green" $pad="0 3px">{count}</CountTd>
                    <Td $tone="white"><Field value={slot} label={`${code} slot length`} tone="white" h={27} /></Td>
                    <Td $tone="cream" $pad="2px 2px 2px 6px">
                      <Option value={kind} others={[kind === 'Plated' ? 'NPlated' : 'Plated', 'Via']} label={`${code} type`} tone="cream" h={27} />
                    </Td>
                    <Td $tone="cream"><Field value={size} label={`${code} finish size`} tone="cream" h={27} /></Td>
                    <Td $tone="cream"><Field value={tol} label={`${code} plus tolerance`} tone="cream" h={27} /></Td>
                    <Td $tone="cream"><Field value={tol} label={`${code} minus tolerance`} tone="cream" h={27} /></Td>
                    <Td $tone="white"><Field value={drill} label={`${code} drill size`} tone="white" h={27} /></Td>
                    <Td $tone="white" $focus={code === 'T11'}><Field value="" label={`${code} designator`} tone="white" h={27} beam={code !== 'T11'} /></Td>
                  </tr>
                ))}
                <tr>
                  <Td $tone="green" />
                  <Td $tone="green"><ToolCode $tone="green" $h={27}>Total</ToolCode></Td>
                  <CountTd $tone="green" $pad="0 3px">4558</CountTd>
                  {Array.from({ length: 7 }, (_, i) => <Td key={i} $tone="green" />)}
                </tr>
              </tbody>
            </DrillTable>
          </Viewport>
          <ScrollTrack before={120} thumb={523} after={6} />
          <ScrollTrack horizontal before={1} thumb={634} after={79} />
        </TableArea>
        <Line $h={34}>
          <Tag>T01</Tag>
          <Cell $w={59}><PushButton>First</PushButton></Cell>
          <Cell $w={35}><PushButton>&lt;--</PushButton></Cell>
          <Cell $w={35}><PushButton>--&gt;</PushButton></Cell>
          <Cell $w={49}><PushButton>Last</PushButton></Cell>
          <Cell $w={124} $pad="0 3px 0 0">
            <Caption $w={60}>Index:</Caption>
            <Field value="" label="Index" tone="green" w={59} h={29} />
          </Cell>
          <Cell $w={29}><PushButton aria-label="Highlight">
            <svg width="16" height="17" viewBox="0 0 16 17" fill="none" stroke="#000"><path d="M.5.500h15v16H.5zM6 11c-4-3-2-8 2-8s6 5 2 8zM6 11v3h4v-3" /></svg>
          </PushButton></Cell>
          <Cell $w={29}><PushButton aria-label="Serpentine select">
            <svg width="16" height="17" viewBox="0 0 16 17" fill="none" stroke="#000"><path d="M.5.500h15v16H.5zM13 4H5v4l6 1v4H3l-1 1M3 14l2-1 2 1 2-1 2 1" /></svg>
          </PushButton></Cell>
          <Cell $w={29}><PushButton aria-label="Clear selection">
            <svg width="16" height="17" viewBox="0 0 16 17" fill="none" stroke="#000"><path d="M.5.500h15v16H.5zM6 11c-4-3-2-8 2-8s6 5 2 8zM6 11v3h4v-3" /><path d="M2 2l12 13M14 2L2 15" stroke="#e01818" strokeWidth="1.500" /></svg>
          </PushButton></Cell>
          <Spacer />
          <Cell $w={88} $tone="aqua" $pad="0 1px 0 6px"><Option value="ml/my" label="Units" tone="aqua" h={28} /></Cell>
          <Cell $w={115} $tone="aqua" $pad="0 1px 0 6px"><Option value="Regular" label="Table mode" tone="aqua" h={28} /></Cell>
        </Line>
        <Line $h={34} $ruled>
          <Spacer />
          <Cell $w={131}><PushButton>Combine Tools</PushButton></Cell>
          <Cell $w={360} $tone="aqua" $pad="0 1px 0 8px">
            <Caption $w={135}>Merge Tools :</Caption>
            <Option value="Update Tools Numbers" label="Merge Tools" tone="aqua" w={214} h={28} />
          </Cell>
          <Cell $w={58}><PushButton>Merge</PushButton></Cell>
        </Line>
        <ActionRow>
          {['Apply', 'Calc Drills', 'Update Table', 'Close'].map(t => (
            <ActionCell key={t}><PushButton $h={24}>{t}</PushButton></ActionCell>
          ))}
        </ActionRow>
      </DialogBody>
    </Dialog>
  );
}

export default function App() {
  return (
    <Desktop>
      <GlobalStyle />
      <TitleBar>
        <svg width="8" height="28" viewBox="8 -7 8 28"><path d="M0 0h16v15H0z" fill="#fffff0" /><path d="M0 0h16v3H0z" fill="#777" /><path d="M4 5l7 7M11 5l-7 7" stroke="#b9a500" strokeWidth="2" /></svg>
        <TitleText>Graphic Editor 9.07b2 (00@HY-HYCAM-PC411 - Windows, pid:5676)</TitleText>
        <ControlGroup>
          <ControlButton aria-label="Minimize"><MinGlyph /></ControlButton>
          <ControlButton aria-label="Maximize"><MaxGlyph /></ControlButton>
          <ControlButton $wide aria-label="Close"><CloseGlyph /></ControlButton>
        </ControlGroup>
      </TitleBar>
      <AppFrame>
        <HeaderRow>
          <MenuBar>
            {menus.map(([a, u, b]) => <MenuItem key={a + u + b}>{a}{u && <u>{u}</u>}{b}</MenuItem>)}
            <MenuItem $last>Help</MenuItem>
          </MenuBar>
          <Brand>
            <FrontlineLogo />
            <BrandTitles>Genesis 2000<BrandSub>Graphic Editor</BrandSub></BrandTitles>
            <Clock>01 Aug 2024<br />09:12 PM<PauseMark /></Clock>
          </Brand>
        </HeaderRow>
        <Workspace>
          <LayerPanel>
            <InfoRow>Job : 4s93n022a0</InfoRow>
            <InfoRow>Step: cam</InfoRow>
            <MatrixFrame><MatrixButton>Job Matrix ...</MatrixButton></MatrixFrame>
            <ListRow>
              <ListFrame>
                <ListScroll>
                  {layerGroups.map((group, gi) => (
                    <Group key={gi} $cut={gi === 0}>
                      {group.map(([name, bg]) => (
                        <LayerRow key={name}>
                          <LayerTick type="checkbox" id={`layer-${gi}-${name}`} />
                          <Swatch $on={name === 'detail2.d'} />
                          <LayerName $bg={bg} htmlFor={`layer-${gi}-${name}`}>{name}</LayerName>
                        </LayerRow>
                      ))}
                    </Group>
                  ))}
                </ListScroll>
              </ListFrame>
              <ScrollTrack before={141} thumb={617} after={1} />
            </ListRow>
            <InfoRow $warm>Selected : 0</InfoRow>
          </LayerPanel>
          <CadDrawing />
          <SideColumn>
            <ToolGrid>
              {toolNames.map((n, i) => (
                <ToolButton key={n} aria-label={n} $alert={i >= 14}><ToolIcon index={i} /></ToolButton>
              ))}
            </ToolGrid>
            <Overview>
              <OverviewSheet>
                <svg width="24" height="22" viewBox="0 0 24 22">
                  <path d="M5 3h16v14H5z" fill="none" stroke="#19e3ee" strokeWidth="2" />
                  <path d="M4 2h8v5H4zM4 13h4v4H4z" fill="#19e3ee" />
                  <path d="M2 20l7-6M3 13l6 7" stroke="#d9b0a0" />
                </svg>
              </OverviewSheet>
            </Overview>
            <Coordinates>{'X = 246.486627mm\nY = 130.574730mm'}</Coordinates>
          </SideColumn>
        </Workspace>
        <StatusBar>
          <StatusCell $grow>
            <IconFrame $w={24} aria-label="Line mode"><svg width="18" height="21" viewBox="0 0 18 21" fill="none" stroke="#000"><path d="M.5.500h17v20H.5zM4 5l10 11M4 9V5h4M10 16h4v-4" /></svg></IconFrame>
            <IconFrame $w={29} aria-label="Angle mode"><svg width="19" height="21" viewBox="0 0 19 21" fill="none" stroke="#000"><path d="M.5.500h18v20H.5zM15 3L4 17h12M5 4v5h3M11 14h4" /></svg></IconFrame>
            <IconFrame $w={29} $on aria-label="Grid mode"><svg width="19" height="21" viewBox="0 0 19 21" fill="none" stroke="#000"><path d="M.5.500h18v20H.5zM4 8l5-5h7v14H4zM10 3v14M4 11h12" /></svg></IconFrame>
            <Caption $w={46} htmlFor="xy-entry">X Y :</Caption>
            <XYBox>
              <Overlay>
                <FieldInput id="xy-entry" $tone="cream" $h={27} defaultValue="" />
                <IBeam />
              </Overlay>
            </XYBox>
            <IconFrame $w={28} $on aria-label="Interrupt"><svg width="16" height="18" viewBox="0 0 16 18" fill="none" stroke="#000"><path d="M.5.500h15v17H.5z" /><path d="M8 3v8M8 13v2" strokeWidth="2" /></svg></IconFrame>
            <Caption>&lt;M1&gt; - Select first corner</Caption>
          </StatusCell>
          <StatusCell $green>
            <UnitPad><Option value="MM" others={['INCH']} label="Display units" tone="green" w={70} h={27} /></UnitPad>
          </StatusCell>
        </StatusBar>
        <MessageStrip />
      </AppFrame>
      <Taskbar>
        <StartOrb aria-label="Start">
          <svg width="38" height="38" viewBox="0 0 38 38">
            <defs><radialGradient id="orb" cx=".5" cy=".9" r=".9"><stop offset="0" stopColor="#4fd0f5" /><stop offset=".6" stopColor="#1d5c9c" /><stop offset="1" stopColor="#7fa5c5" /></radialGradient></defs>
            <circle cx="19" cy="19" r="18" fill="url(#orb)" stroke="#a9c4dc" />
            <path d="M10 11c3-2 6-2 8 0l-2 8c-2-1-5-1-8 0z" fill="#f2662b" />
            <path d="M20 12c3 1 6 1 9-1l-3 8c-2 1-5 1-8 0z" fill="#8fc63e" />
            <path d="M8 21c3-1 5-1 8 0l-2 7c-2-1-5-1-8 1z" fill="#3fa0e6" />
            <path d="M18 22c2 1 5 1 8 0l-2 7c-3 1-6 1-8 0z" fill="#fcc522" />
          </svg>
        </StartOrb>
        {taskIcons.map(t => (
          <TaskButton key={t.name} aria-label={t.name} $active={t.active} $stack={t.stack}>
            <svg width="35" height="35" viewBox="0 0 35 35">{t.art}</svg>
          </TaskButton>
        ))}
        <Tray>
          <svg width="16" height="14" viewBox="0 0 16 14"><path d="M1 4h14v8H1z" fill="#d5d9de" stroke="#666" /><path d="M3 6h10M3 8h10M5 10h6M8 4V1h4" stroke="#444" fill="none" /></svg>
          <svg width="15" height="15" viewBox="0 0 15 15"><circle cx="7.500" cy="7.500" r="7" fill="#2a35c9" stroke="#cfd4ff" /><text x="4.500" y="12" fontSize="12" fontWeight="bold" fill="#fff">?</text></svg>
          <svg width="9" height="20" viewBox="0 0 9 20"><path d="M3 1h5v4H3zM1 3h5v4H1z" fill="none" stroke="#fff" /><path d="M2 15h5l-2.500 3z" fill="#fff" /></svg>
          <svg width="9" height="8" viewBox="0 0 9 8"><path d="M1 6h7L4.500 2z" fill="#fff" /></svg>
          <svg width="17" height="17" viewBox="0 0 17 17"><path d="M4 1v15M4 2h9l-2 3 2 4H4" fill="#eee" stroke="#fff" /><circle cx="11" cy="12" r="4" fill="#e02020" /><path d="M9 10l4 4M13 10l-4 4" stroke="#fff" /></svg>
          <svg width="17" height="16" viewBox="0 0 17 16"><path d="M5 4h11v8H5zM8 15h6M3 1v9M1 2h4v3H1z" fill="none" stroke="#fff" strokeWidth="1.300" /></svg>
          <TrayClock>21:20<br />2024/8/1</TrayClock>
          <ShowDesktop aria-label="Show desktop" />
        </Tray>
      </Taskbar>

      <DrillDialog />

      <Popup>
        <PopupTitle>
          <XIcon />
          <h2>Measure Popup</h2>
          <PopupClose aria-label="Close popup"><CloseGlyph /></PopupClose>
        </PopupTitle>
        <ModeLegend>Measure Mode</ModeLegend>
        <ModeSet aria-label="Measure Mode">
          {['Between Points', 'Between Contours', 'Between Nets', 'Annular Ring', 'Between Midpoints'].map((m, i) => (
            <ModeLabel key={m}><Diamond type="radio" name="measure-mode" defaultChecked={i === 0} />{m}</ModeLabel>
          ))}
        </ModeSet>
        <PopupFoot><PushButton $h={25}>Close</PushButton></PopupFoot>
      </Popup>

      <ArrowLayer width="420" height="520" viewBox="1000 280 420 520" fill="#00ff00" stroke="#00ff00">
        <path d="M1035 301.500L1307 313.500" strokeWidth="5" strokeLinecap="round" />
        <path d="M1014 300l28-7-1 16z" stroke="none" />
        <path d="M1393 523L1058 767" strokeWidth="5" strokeLinecap="round" />
        <path d="M1038 782l16-25 13 16z" stroke="none" />
      </ArrowLayer>
    </Desktop>
  );
}
